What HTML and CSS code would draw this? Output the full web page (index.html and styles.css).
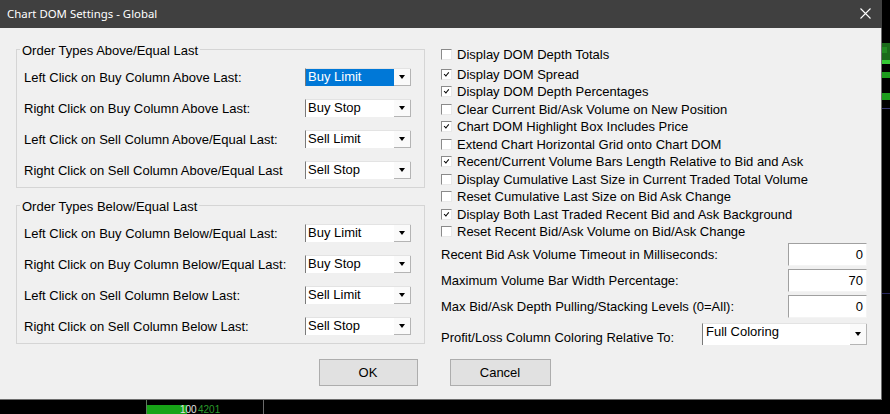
FILE: index.html
```html
<!DOCTYPE html>
<html lang="en">
<head>
    <meta charset="UTF-8">
    <meta name="viewport" content="width=device-width, initial-scale=1.0">
    <title>Chart DOM Settings - Global</title>
    <link rel="stylesheet" href="styles.css">
</head>
<body>
    <div class="screen">
        <div class="dialog">
            <div class="titlebar">
                <span class="title">Chart DOM Settings - Global</span>
                <svg class="close" width="11" height="11" viewBox="0 0 11 11">
                    <path d="M0.5 0.5 L10.5 10.5 M10.5 0.5 L0.5 10.5" stroke="#fff" stroke-width="1.1" fill="none"/>
                </svg>
            </div>

            <div class="body">
                <div class="columns">
                    <div class="left">
                        <fieldset class="group">
                            <legend>Order Types Above/Equal Last</legend>
                            <div class="row">
                                <span>Left Click on Buy Column Above Last:</span>
                                <div class="combo selected"><span class="value">Buy Limit</span><span class="arrow"></span></div>
                            </div>
                            <div class="row">
                                <span>Right Click on Buy Column Above Last:</span>
                                <div class="combo"><span class="value">Buy Stop</span><span class="arrow"></span></div>
                            </div>
                            <div class="row">
                                <span>Left Click on Sell Column Above/Equal Last:</span>
                                <div class="combo"><span class="value">Sell Limit</span><span class="arrow"></span></div>
                            </div>
                            <div class="row">
                                <span>Right Click on Sell Column Above/Equal Last</span>
                                <div class="combo"><span class="value">Sell Stop</span><span class="arrow"></span></div>
                            </div>
                        </fieldset>

                        <fieldset class="group">
                            <legend>Order Types Below/Equal Last</legend>
                            <div class="row">
                                <span>Left Click on Buy Column Below/Equal Last:</span>
                                <div class="combo"><span class="value">Buy Limit</span><span class="arrow"></span></div>
                            </div>
                            <div class="row">
                                <span>Right Click on Buy Column Below/Equal Last:</span>
                                <div class="combo"><span class="value">Buy Stop</span><span class="arrow"></span></div>
                            </div>
                            <div class="row">
                                <span>Left Click on Sell Column Below Last:</span>
                                <div class="combo"><span class="value">Sell Limit</span><span class="arrow"></span></div>
                            </div>
                            <div class="row">
                                <span>Right Click on Sell Column Below Last:</span>
                                <div class="combo"><span class="value">Sell Stop</span><span class="arrow"></span></div>
                            </div>
                        </fieldset>
                    </div>

                    <div class="right">
                        <div class="checks">
                            <div class="check-row first"><span class="box"></span>Display DOM Depth Totals</div>
                            <div class="check-row"><span class="box on"></span>Display DOM Spread</div>
                            <div class="check-row"><span class="box on"></span>Display DOM Depth Percentages</div>
                            <div class="check-row"><span class="box"></span>Clear Current Bid/Ask Volume on New Position</div>
                            <div class="check-row"><span class="box on"></span>Chart DOM Highlight Box Includes Price</div>
                            <div class="check-row"><span class="box"></span>Extend Chart Horizontal Grid onto Chart DOM</div>
                            <div class="check-row"><span class="box on"></span>Recent/Current Volume Bars Length Relative to Bid and Ask</div>
                            <div class="check-row"><span class="box"></span>Display Cumulative Last Size in Current Traded Total Volume</div>
                            <div class="check-row"><span class="box"></span>Reset Cumulative Last Size on Bid Ask Change</div>
                            <div class="check-row"><span class="box on"></span>Display Both Last Traded Recent Bid and Ask Background</div>
                            <div class="check-row"><span class="box"></span>Reset Recent Bid/Ask Volume on Bid/Ask Change</div>
                        </div>

                        <div class="fields">
                            <div class="field-row">
                                <span>Recent Bid Ask Volume Timeout in Milliseconds:</span>
                                <div class="textbox">0</div>
                            </div>
                            <div class="field-row">
                                <span>Maximum Volume Bar Width Percentage:</span>
                                <div class="textbox">70</div>
                            </div>
                            <div class="field-row">
                                <span>Max Bid/Ask Depth Pulling/Stacking Levels (0=All):</span>
                                <div class="textbox">0</div>
                            </div>
                            <div class="select-row">
                                <span>Profit/Loss Column Coloring Relative To:</span>
                                <div class="combo wide"><span class="value">Full Coloring</span><span class="arrow"></span></div>
                            </div>
                        </div>
                    </div>
                </div>

                <div class="buttons">
                    <button class="btn ok">OK</button>
                    <button class="btn cancel">Cancel</button>
                </div>
            </div>
        </div>

        <!-- chart peeking out behind the dialog -->
        <div class="side">
            <svg width="8" height="400" viewBox="0 0 8 400">
                <rect x="0" y="43" width="8" height="17" fill="#1b6b1b"/>
                <rect x="0" y="47" width="5" height="6" fill="#238a23"/>
                <rect x="0" y="60" width="8" height="4" fill="#34c834"/>
                <rect x="0" y="72" width="8" height="6" fill="#1d9c1d"/>
                <rect x="0" y="93" width="8" height="7" fill="#1d9c1d"/>
                <rect x="0" y="108" width="8" height="1" fill="#3a3a78"/>
                <rect x="0" y="293" width="8" height="1" fill="#26265e"/>
            </svg>
        </div>
        <div class="bottom">
            <svg width="890" height="14" viewBox="0 0 890 14">
                <rect x="146" y="0" width="1" height="14" fill="#5c7a5c"/>
                <rect x="147" y="5" width="40" height="9" fill="#17a317"/>
                <text x="180" y="13" font-family="Liberation Sans, sans-serif" font-size="10" fill="#e0e0e0">100</text>
                <text x="198" y="13" font-family="Liberation Sans, sans-serif" font-size="10" fill="#2a9a2a">4201</text>
                <rect x="263" y="0" width="1" height="14" fill="#6a6a6a"/>
            </svg>
        </div>
    </div>
</body>
</html>
```

FILE: styles.css
```css
body {
    margin: 0;
    background: #000;
    font-family: 'Liberation Sans', Arial, sans-serif;
    font-size: 13px;
    color: #000;
}

.screen {
    display: grid;
    grid-template-columns: 882px 8px;
    grid-template-rows: 400px 14px;
    width: 890px;
    height: 414px;
    overflow: hidden;
}

.dialog {
    display: flex;
    flex-direction: column;
    background: #f0f0f0;
    box-shadow: inset -1px -1px 0 #6e6e6e;
}

.titlebar {
    height: 28px;
    flex: none;
    background: #404040;
    display: flex;
    align-items: center;
    justify-content: space-between;
    padding: 0 11px 0 7px;
}

.title {
    font-family: 'Noto Sans', 'Open Sans', sans-serif;
    font-size: 11.4px;
    color: #fff;
    margin-top: -1px;
}

.close {
    display: block;
    margin-top: -1px;
}

.body {
    flex: 1;
    padding: 12px 15px 0 16px;
}

.columns {
    display: flex;
    gap: 16px;
}

.left {
    width: 409px;
    display: flex;
    flex-direction: column;
    gap: 8px;
}

.group {
    margin: 0;
    border: 1px solid #d5d5d5;
    padding: 3px 13px 2px 7px;
    min-width: 0;
}

.group legend {
    padding: 3px 2px 0;
    margin-left: -4px;
    line-height: 15px;
}

.row {
    height: 31px;
    display: flex;
    align-items: center;
    justify-content: space-between;
}

.row > span {
    padding-top: 2px;
}

/* combo box */
.combo {
    width: 106px;
    height: 18px;
    box-sizing: border-box;
    display: flex;
    background: #fff;
    border-left: 1px solid #7a7a7a;
    border-top: 1px solid #e3e3e3;
}

.combo .value {
    flex: 1;
    padding-left: 2px;
    line-height: 16px;
    white-space: nowrap;
}

.combo.selected .value {
    background: #0078d7;
    color: #fff;
}

.combo .arrow {
    width: 17px;
    flex: none;
    box-sizing: border-box;
    background: #fafafa;
    border-right: 1px solid #b4b4b4;
    border-bottom: 1px solid #b4b4b4;
    display: flex;
    align-items: center;
    justify-content: center;
}

.combo .arrow::after {
    content: "";
    border-left: 3.5px solid transparent;
    border-right: 3.5px solid transparent;
    border-top: 4px solid #000;
}

.combo.wide {
    width: 165px;
    height: 22px;
}

.combo.wide .value {
    padding-left: 3px;
    line-height: 15px;
}

/* right column */
.right {
    flex: 1;
    padding-top: 6px;
}

.check-row {
    height: 17.5px;
    display: flex;
    align-items: center;
    gap: 5px;
    white-space: nowrap;
}

.check-row.first {
    margin-bottom: 2px;
}

.box {
    width: 11px;
    height: 11px;
    box-sizing: border-box;
    background: #fff;
    border-top: 1px solid #8a8a8a;
    border-left: 1px solid #8a8a8a;
    border-right: 1px solid #e8e8e8;
    border-bottom: 1px solid #e8e8e8;
    position: relative;
    flex: none;
}

.box.on::after {
    content: "";
    position: absolute;
    left: 3px;
    top: 1px;
    width: 1.5px;
    height: 4px;
    border-right: 1.5px solid #000;
    border-bottom: 1.5px solid #000;
    transform: rotate(40deg);
}

.fields {
    margin-top: 1px;
}

.field-row {
    height: 26px;
    display: flex;
    align-items: center;
    justify-content: space-between;
}

.textbox {
    width: 79px;
    height: 23px;
    box-sizing: border-box;
    background: #fff;
    border-top: 1px solid #a0a0a0;
    border-left: 1px solid #a0a0a0;
    border-right: 1px solid #f4f4f4;
    border-bottom: 1px solid #f4f4f4;
    text-align: right;
    padding: 2px 3px 0 0;
    line-height: 17px;
}

.select-row {
    margin-top: 3px;
    height: 22px;
    display: flex;
    align-items: flex-end;
    justify-content: space-between;
}

.select-row > span {
    line-height: 15px;
}

.buttons {
    display: flex;
    justify-content: center;
    gap: 32px;
    padding-right: 14px;
    margin-top: 14px;
}

.btn {
    height: 27px;
    width: 99px;
    background: #e1e1e1;
    border: 1px solid #adadad;
    font-family: 'Liberation Sans', Arial, sans-serif;
    font-size: 13px;
    color: #000;
    padding: 0;
}

.btn.cancel {
    width: 101px;
}

.side svg,
.bottom svg {
    display: block;
}

.bottom {
    grid-column: 1 / 3;
}
```
